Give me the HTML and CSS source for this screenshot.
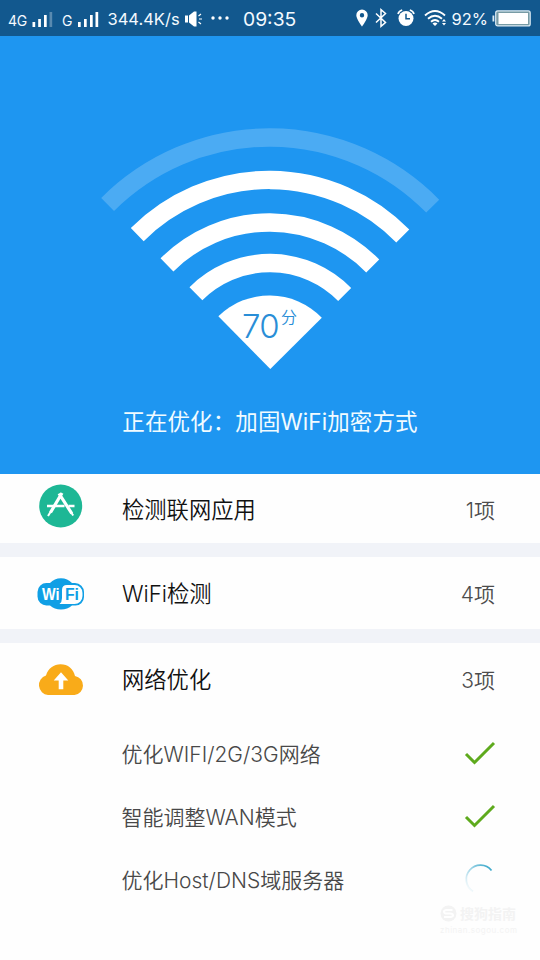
FILE: index.html
```html
<!DOCTYPE html>
<html lang="zh-CN">
<head>
<meta charset="utf-8">
<title>WiFi优化</title>
<link rel="stylesheet" href="styles.css">
</head>
<body>
<header class="status">
  <span class="net">4G</span>
  <svg class="bars" width="22" height="16" viewBox="0 0 22 16" fill="#fff"><path d="M1.500 10h2.700v5H1.500zM7.200 7h2.700v8H7.200zM13 3h2.700v12H13z"/><path opacity=".3" d="M18.500 0h2.700v15h-2.700z"/></svg>
  <span class="net net2">G</span>
  <svg class="bars" width="22" height="16" viewBox="0 0 22 16" fill="#fff"><path d="M1 10h2.700v5H1zM7 7h2.700v8H7zM13 3h2.700v12H13zM18.500 0h2.700v15h-2.700z"/></svg>
  <span class="speed">344.4K/s</span>
  <svg class="sound" width="19" height="16" viewBox="0 0 19 16"><path fill="#fff" d="M1 4.500h3v7H1zM5 4.500l5-4h2.500v15H10l-5-4z"/><path stroke="#fff" stroke-width="1.200" d="M14.500 5l2.500-2M15 8h3M14.500 11l2.500 2"/></svg>
  <svg class="dots" width="20" height="6" viewBox="0 0 20 6" fill="#fff"><circle cx="3" cy="3" r="1.700"/><circle cx="10" cy="3" r="1.700"/><circle cx="17" cy="3" r="1.700"/></svg>
  <span class="clock">09:35</span>
  <div class="right">
    <svg class="pin" width="12" height="18" viewBox="0 0 12 18"><path fill="#fff" fill-rule="evenodd" d="M6 .5A5.700 5.700 0 0 0 .3 6.200C.3 10 6 17.500 6 17.500S11.700 10 11.700 6.200A5.700 5.700 0 0 0 6 .5zm0 3.600a2.200 2.200 0 1 1 0 4.400 2.200 2.200 0 0 1 0-4.400z"/></svg>
    <svg class="bt" width="12" height="20" viewBox="0 0 12 20"><path fill="none" stroke="#fff" stroke-width="1.500" d="M1 5.500l9.500 9L6 18.300V1.700l4.500 3.800-9.500 9"/></svg>
    <svg class="alarm" width="18" height="18" viewBox="0 0 18 18"><circle cx="9" cy="9.500" r="7.500" fill="#fff"/><path d="M9 4.800v5h4" fill="none" stroke="#12588e" stroke-width="1.500"/><path d="M1 5q.8-3 4.200-4M17 5q-.8-3-4.200-4" fill="none" stroke="#fff" stroke-width="1.700"/></svg>
    <svg class="wifi" width="23" height="18" viewBox="0 0 23 18"><g fill="none" stroke="#fff" stroke-width="1.900"><path d="M1 6.500q10-9 20 0M4 9.800q7-6.300 14 0M7 12.800q4-3.600 8 0"/></g><path fill="#fff" d="M8.500 14.500q2.500-1.900 5 0L11 17zM18 12.500l2-2.500 2 2.500zM18 14l2 2.500 2-2.500z"/></svg>
    <span class="percent">92%</span>
    <svg class="battery" width="39" height="17" viewBox="0 0 39 17"><rect x="3.700" y=".9" width="34.500" height="15" rx="2" fill="#779ba5" stroke="#dcecf5" stroke-width="1.200"/><path fill="#dcecf5" d="M.5 5.500h1.800v6H.5z"/><path fill="#fff" d="M6.500 3h29.500v11H6.500z"/></svg>
  </div>
</header>

<section class="hero">
  <div class="gauge">
    <svg width="340" height="244" viewBox="0 0 340 244">
      <g transform="translate(170.300 242) rotate(.3) scale(.993 1)" fill="none" stroke="#fff" stroke-width="18.400">
        <g transform="translate(-1 0)">
          <path opacity=".2" d="M-163.700-163.700A231.500 231.500 0 0 1 163.700-163.700"/>
          <path d="M-133.700-133.700A189.100 189.100 0 0 1 133.700-133.700"/>
          <path d="M-103.600-103.600A146.500 146.500 0 0 1 103.600-103.600"/>
        </g>
        <path d="M-75.300-74.900A105.900 105.900 0 0 1 74.500-74.900"/>
        <path fill="#fff" stroke="none" d="M0 0L-52.600-52.600A74 74 0 0 1 51.600-51.600z"/>
      </g>
    </svg>
    <div class="score"><span class="num">70</span><span class="unit">分</span></div>
  </div>
  <p class="caption">正在优化：加固WiFi加密方式</p>
</section>

<main>
  <section class="row row-app">
    <svg class="icon" width="48" height="44" viewBox="0 0 48 44"><circle cx="23.700" cy="22" r="21.500" fill="#1db795"/><g fill="none" stroke="#fff" stroke-width="3.200"><path d="M25 9L13.500 28.500M22 9.500L34.800 29.500"/><path stroke-width="2.600" d="M10 22H27.500M31.500 22h6"/><path stroke-width="2" d="M13.500 28l-2.500 4M34.500 29l1.700 2.500"/></g></svg>
    <h2>检测联网应用</h2><span class="count">1项</span>
  </section>
  <section class="row row-wifi">
    <svg class="icon" width="48" height="34" viewBox="0 0 48 34"><path fill="#109fe5" d="M10 6h3C16 3 19.500 1.300 24 1.300S32 3 35 6h3a9 9 0 0 1 9 9v5a8.500 8.500 0 0 1-9 8.500h-3c-3 2.700-6.500 4-11 4s-8-1.300-11-4h-3a9 9 0 0 1-9.500-9V15A9 9 0 0 1 10 6z"/><path fill="#fff" d="M30 8h7.500a8 8 0 0 1 8 8v3a8 8 0 0 1-8 8H22.500q2.500-2 2.500-6v-8q0-5 5-5z"/><text x="5" y="23" class="logo" fill="#fff" textLength="17.500" lengthAdjust="spacingAndGlyphs">Wi</text><text x="28" y="23" class="logo" fill="#109fe5" textLength="14" lengthAdjust="spacingAndGlyphs">Fi</text></svg>
    <h2>WiFi检测</h2><span class="count">4项</span>
  </section>
  <section class="row row-net">
    <svg class="icon" width="48" height="34" viewBox="0 0 48 34"><path fill="#f9ab19" d="M11 32A10 10 0 0 1 9 12.500C11 5.500 17 1.300 23.500 1.300c7.500 0 13 4.700 14.500 11.700a9.600 9.600 0 0 1-.5 19z"/><path fill="#fff" d="M24 9.300l7.300 8.200h-5v8.800h-4.600v-8.800h-5z"/></svg>
    <h2>网络优化</h2><span class="count">3项</span>
  </section>
  <ul class="tasks">
    <li><span>优化WIFI/2G/3G网络</span><svg width="32" height="26" viewBox="0 0 32 26"><path fill="none" stroke="#5eaa1d" stroke-width="3" d="M2 14l8.500 8.500L30 3"/></svg></li>
    <li><span>智能调整WAN模式</span><svg width="32" height="26" viewBox="0 0 32 26"><path fill="none" stroke="#5eaa1d" stroke-width="3" d="M2 14l8.500 8.500L30 3"/></svg></li>
    <li><span>优化Host/DNS域服务器</span><svg width="32" height="32" viewBox="0 0 32 32"><defs><linearGradient id="spin" x1="0" y1="1" x2="1" y2="0"><stop offset=".05" stop-color="#7fc6df" stop-opacity="0"/><stop offset=".5" stop-color="#7fc6df" stop-opacity=".7"/><stop offset="1" stop-color="#249fc4"/></linearGradient></defs><path fill="none" stroke="url(#spin)" stroke-width="1.800" d="M9 28.500A14.200 14.200 0 1 1 27.500 7.500"/></svg></li>
  </ul>
</main>
<footer class="mark">
  <div class="mark-name"><svg width="17" height="17" viewBox="0 0 17 17"><circle cx="8.500" cy="8.500" r="8" fill="#f3f3f3"/><path fill="none" stroke="#fff" stroke-width="2" d="M12.500 5H7q-3 0-3 1.800t3 1.700h3q3 0 3 1.700T10 12H4"/></svg><span>搜狗指南</span></div>
  <div class="mark-url">zhinan.sogou.com</div>
</footer>
</body>
</html>
```

FILE: styles.css
```css
* { box-sizing: border-box; }
body {
  margin: 0;
  width: 540px;
  height: 960px;
  overflow: hidden;
  background: #fefefe;
  color: #111;
  font-family: Inter, "Noto Sans CJK SC", sans-serif;
  display: flex;
  flex-direction: column;
}
svg { display: block; flex: none; }
h2, p, ul { margin: 0; padding: 0; font-weight: 350; }
span { white-space: nowrap; }

.status {
  height: 36px;
  flex: none;
  display: flex;
  align-items: center;
  background: #12588e;
  color: #f4faff;
  padding-left: 8px;
}
.net { width: 23px; font-size: 14px; letter-spacing: -.3px; padding-top: 4px; }
.bars { margin-top: 3px; }
.net2 { width: 15px; margin-left: 9px; }
.speed { margin-left: 8.500px; width: 76px; font-size: 16.500px; padding-top: 1px; }
.sound { margin-top: 2px; }
.dots { margin-left: 7.500px; }
.clock { margin-left: 13px; width: 57px; font-size: 19.300px; padding-top: 2px; }
.right { display: flex; align-items: center; margin-left: 56px; }
.bt { margin-left: 7px; }
.alarm { margin-left: 10px; }
.wifi { margin-left: 9px; }
.percent { margin-left: 4.500px; width: 37px; font-size: 16.500px; padding-top: 1px; }
.battery { margin-left: 3.500px; }

.hero {
  height: 438px;
  flex: none;
  padding-top: 91px;
  background: #1e96f1;
  display: flex;
  flex-direction: column;
  align-items: center;
}
.gauge { position: relative; }
.score {
  position: absolute;
  left: 142px;
  top: 178px;
  display: flex;
  color: #298ed7;
  font-weight: 300;
}
.num { font-size: 33px; line-height: 42px; letter-spacing: -.6px; width: 39px; }
.unit { font-size: 16px; line-height: 24px; font-weight: 350; }
.caption { color: #f1fbff; font-size: 22.500px; line-height: 32px; margin-top: 35px; letter-spacing: .1px; font-weight: 400; white-space: nowrap; }

.row {
  display: flex;
  align-items: center;
  padding: 0 45px 0 37px;
  border-bottom: 14px solid #f1f3f8;
}
.row-app { height: 83px; }
.row-app .icon { margin-bottom: 6px; }
.row-app h2 { padding-top: 2px; }
.row-wifi { height: 86px; }
.row-wifi .icon { margin-top: 1px; }
.row-wifi h2 { padding-top: 2px; }
.row-net { height: 72px; border: 0; }
.row-net .icon { margin-top: 2px; }
.row-net h2 { padding-top: 2px; }
.row h2 { margin-left: 37px; font-size: 22.300px; line-height: 32px; }
.count { margin-left: auto; font-size: 21px; color: #4c4c4c; font-weight: 350; }
.logo { font: 700 16px "Liberation Sans", sans-serif; }
.tasks { list-style: none; padding: 6px 44px 0 121.500px; }
.tasks li { height: 63px; display: flex; align-items: center; justify-content: space-between; font-size: 21px; color: #484848; font-weight: 350; }

.mark { width: 80px; margin: -6px 0 0 440px; color: #f3f3f3; }
.mark-name { display: flex; align-items: center; gap: 3px; font-size: 14px; font-weight: 700; line-height: 19px; }
.mark-url { font-size: 8px; line-height: 11px; margin-top: 2px; letter-spacing: .5px; }
```
